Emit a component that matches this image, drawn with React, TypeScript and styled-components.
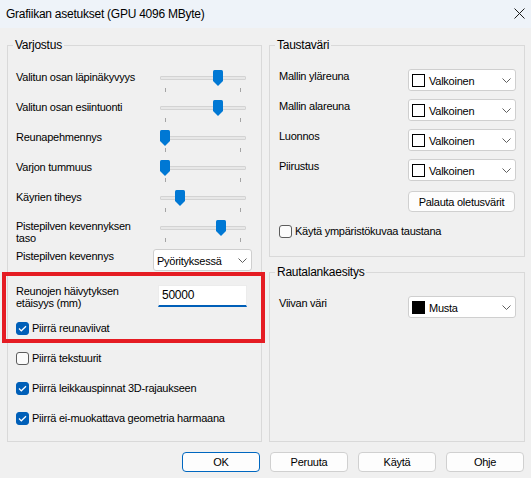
import React from "react";
import styled, { createGlobalStyle } from "styled-components";

const GlobalStyle = createGlobalStyle`
  html, body {
    margin: 0;
    padding: 0;
    background: #f0f0f0;
  }
  body {
    font-family: "Segoe UI", "Liberation Sans", Arial, sans-serif;
  }
`;

const Window = styled.div`
  width: 531px;
  height: 478px;
  background: #f0f0f0;
  color: #000;
  font-size: 11px;
  letter-spacing: -0.25px;
  display: flex;
  flex-direction: column;
  overflow: hidden;
`;

const TitleBar = styled.div`
  height: 28px;
  flex: none;
  background: #eef3f9;
  display: flex;
  align-items: center;
  justify-content: space-between;
  padding: 0 6px 0 6px;
  font-size: 12px;
`;

const CloseButton = styled.div`
  width: 11px;
  height: 11px;
  margin-top: -2px;
  display: flex;
`;

const Body = styled.div`
  display: grid;
  grid-template-columns: 255px 256px;
  column-gap: 7px;
  padding: 10px 0 0 7px;
  height: 404px;
  flex: none;
`;

const Column = styled.div`
  display: flex;
  flex-direction: column;
  gap: 8px;
`;

const Group = styled.fieldset<{ $height?: number }>`
  margin: 0;
  padding: 0;
  border: 1px solid #d9d9d9;
  box-sizing: border-box;
  min-width: 0;
  ${(p) => (p.$height ? `height: ${p.$height}px; flex: none;` : "flex: 1;")}
`;

const Legend = styled.legend`
  margin-left: 5px;
  padding: 0 2px;
  font-size: 12px;
  line-height: 14px;
`;

const GroupBody = styled.div<{ $top: number; $side: number }>`
  display: flex;
  flex-direction: column;
  padding: ${(p) => p.$top}px ${(p) => p.$side}px 0;
`;

const SliderRow = styled.div`
  display: grid;
  grid-template-columns: 144px 86px;
  height: 30px;
  align-items: start;
`;

const Label = styled.div<{ $lh?: number }>`
  line-height: ${(p) => p.$lh ?? 14}px;
  white-space: nowrap;
`;

const Slider = styled.div`
  position: relative;
  width: 86px;
  height: 22px;
`;

const Track = styled.div`
  position: absolute;
  left: 0;
  right: 0;
  top: 6px;
  height: 4px;
  box-sizing: border-box;
  background: #e7e7e7;
  border: 1px solid #d3d3d3;
  border-radius: 1px;
`;

const Tick = styled.div<{ $x: number }>`
  position: absolute;
  top: 18px;
  left: ${(p) => p.$x}px;
  width: 1px;
  height: 4px;
  background: #a5a5a5;
`;

const Thumb = styled.svg<{ $value: number }>`
  position: absolute;
  top: 0;
  left: ${(p) => Math.round(p.$value * 75)}px;
`;

const DropRow = styled.div<{ $cols: string }>`
  display: grid;
  grid-template-columns: ${(p) => p.$cols};
  align-items: start;
`;

const Combo = styled.div<{ $width: number }>`
  width: ${(p) => p.$width}px;
  height: 22px;
  box-sizing: border-box;
  background: #fff;
  border: 1px solid #cfcfcf;
  border-radius: 3px;
  display: flex;
  align-items: center;
  padding: 0 4px 0 3px;
  gap: 4px;
`;

const ComboText = styled.span`
  flex: 1;
  line-height: 14px;
  padding-top: 1px;
`;

const Swatch = styled.span<{ $color: string }>`
  width: 13px;
  height: 13px;
  box-sizing: border-box;
  border: 1px solid #000;
  background: ${(p) => p.$color};
  flex: none;
`;

const ColorRow = styled.div`
  display: grid;
  grid-template-columns: 129px 108px;
  height: 30px;
  align-items: start;
`;

const Marked = styled.div`
  position: relative;
  margin-top: 1px;
  padding-top: 13px;
  display: flex;
  flex-direction: column;
  gap: 6px;

  &::after {
    content: "";
    position: absolute;
    top: 0;
    bottom: 0;
    left: -14px;
    right: -12px;
    border: 4px solid #e51c23;
    pointer-events: none;
  }
`;

const FieldRow = styled.div`
  display: grid;
  grid-template-columns: 142px 89px;
  height: 22px;
  align-items: start;
`;

const NumberField = styled.div`
  width: 89px;
  height: 22px;
  box-sizing: border-box;
  background: #fff;
  border: 1px solid #ececec;
  border-bottom: 2px solid #005fb8;
  padding: 0 3px;
  line-height: 18px;
  font-size: 12px;
`;

const CheckRow = styled.div<{ $gapTop?: number }>`
  height: 30px;
  display: flex;
  align-items: center;
  gap: 3px;
  margin-top: ${(p) => p.$gapTop ?? 0}px;
`;

const Box = styled.span<{ $on: boolean }>`
  width: 13px;
  height: 13px;
  box-sizing: border-box;
  border-radius: 3px;
  flex: none;
  display: flex;
  align-items: center;
  justify-content: center;
  background: ${(p) => (p.$on ? "#005fb8" : "#fbfbfb")};
  border: 1px solid ${(p) => (p.$on ? "#005fb8" : "#5c5c5c")};
`;

const PushButton = styled.div<{ $primary?: boolean; $width: number; $height: number }>`
  width: ${(p) => p.$width}px;
  height: ${(p) => p.$height}px;
  box-sizing: border-box;
  background: #fdfdfd;
  border: 1px solid ${(p) => (p.$primary ? "#0067c0" : "#d0d0d0")};
  border-radius: 4px;
  display: flex;
  align-items: center;
  justify-content: center;
  flex: none;
`;

const ResetButton = styled(PushButton)`
  align-self: flex-end;
  margin-top: 2px;
`;

const Footer = styled.div`
  display: flex;
  justify-content: flex-end;
  gap: 10px;
  padding: 10px 7px 0 0;
`;

const Chevron = () => (
  <svg width="9" height="5" viewBox="0 0 9 5">
    <path d="M0.5 0.5 L4.5 4.5 L8.5 0.5" fill="none" stroke="#5f5f5f" strokeWidth="1" />
  </svg>
);

const Check = () => (
  <svg width="9" height="7" viewBox="0 0 9 7">
    <path d="M1 3.5 L3.3 5.8 L8 1.2" fill="none" stroke="#fff" strokeWidth="1.2" />
  </svg>
);

const HSlider = ({ value }: { value: number }) => (
  <Slider>
    <Track />
    <Tick $x={5} />
    <Tick $x={80} />
    <Thumb $value={value} width="10" height="16" viewBox="0 0 10 16">
      <path
        d="M1.5 0 H8.5 Q10 0 10 1.5 V11 L5 16 L0 11 V1.5 Q0 0 1.5 0 Z"
        fill="#0078d4"
      />
    </Thumb>
  </Slider>
);

const CheckBox = ({ on, label, gapTop }: { on: boolean; label: string; gapTop?: number }) => (
  <CheckRow $gapTop={gapTop}>
    <Box $on={on}>{on && <Check />}</Box>
    <Label>{label}</Label>
  </CheckRow>
);

const ColorPick = ({ label, color, name }: { label: string; color: string; name: string }) => (
  <ColorRow>
    <Label>{label}</Label>
    <Combo $width={108}>
      <Swatch $color={color} />
      <ComboText>{name}</ComboText>
      <Chevron />
    </Combo>
  </ColorRow>
);

const sliders = [
  { label: "Valitun osan läpinäkyvyys", value: 0.7 },
  { label: "Valitun osan esiintuonti", value: 0.7 },
  { label: "Reunapehmennys", value: 0 },
  { label: "Varjon tummuus", value: 0 },
  { label: "Käyrien tiheys", value: 0.2 },
];

const App: React.FC = () => {
  return (
    <>
      <GlobalStyle />
      <Window>
        <TitleBar>
          <span>Grafiikan asetukset (GPU 4096 MByte)</span>
          <CloseButton>
            <svg width="11" height="11" viewBox="0 0 11 11">
              <path d="M0.5 0.5 L10.5 10.5 M10.5 0.5 L0.5 10.5" stroke="#1b1b1b" strokeWidth="1" />
            </svg>
          </CloseButton>
        </TitleBar>

        <Body>
          <Group>
            <Legend>Varjostus</Legend>
            <GroupBody $top={18} $side={8}>
              {sliders.map((s) => (
                <SliderRow key={s.label}>
                  <Label>{s.label}</Label>
                  <HSlider value={s.value} />
                </SliderRow>
              ))}
              <SliderRow>
                <Label $lh={12}>
                  Pistepilven kevennyksen
                  <br />
                  taso
                </Label>
                <HSlider value={0.75} />
              </SliderRow>
              <DropRow $cols="137px 99px" style={{ marginTop: -1 }}>
                <Label>Pistepilven kevennys</Label>
                <Combo $width={99}>
                  <ComboText>Pyörityksessä</ComboText>
                  <Chevron />
                </Combo>
              </DropRow>

              <Marked>
                <FieldRow>
                  <Label $lh={12}>
                    Reunojen häivytyksen
                    <br />
                    etäisyys (mm)
                  </Label>
                  <NumberField>50000</NumberField>
                </FieldRow>
                <CheckBox on label="Piirrä reunaviivat" />
              </Marked>
              <CheckBox on={false} label="Piirrä tekstuurit" />
              <CheckBox on label="Piirrä leikkauspinnat 3D-rajaukseen" />
              <CheckBox on label="Piirrä ei-muokattava geometria harmaana" />
            </GroupBody>
          </Group>

          <Column>
            <Group $height={219}>
              <Legend>Taustaväri</Legend>
              <GroupBody $top={17} $side={9}>
                <ColorPick label="Mallin yläreuna" color="#fff" name="Valkoinen" />
                <ColorPick label="Mallin alareuna" color="#fff" name="Valkoinen" />
                <ColorPick label="Luonnos" color="#fff" name="Valkoinen" />
                <ColorPick label="Piirustus" color="#fff" name="Valkoinen" />
                <ResetButton $width={107} $height={21}>
                  Palauta oletusvärit
                </ResetButton>
                <CheckBox on={false} label="Käytä ympäristökuvaa taustana" gapTop={4} />
              </GroupBody>
            </Group>
            <Group>
              <Legend>Rautalankaesitys</Legend>
              <GroupBody $top={17} $side={9}>
                <ColorPick label="Viivan väri" color="#000" name="Musta" />
              </GroupBody>
            </Group>
          </Column>
        </Body>

        <Footer>
          <PushButton $primary $width={78} $height={20}>OK</PushButton>
          <PushButton $width={78} $height={20}>Peruuta</PushButton>
          <PushButton $width={78} $height={20}>Käytä</PushButton>
          <PushButton $width={78} $height={20}>Ohje</PushButton>
        </Footer>
      </Window>
    </>
  );
};

export default App;
